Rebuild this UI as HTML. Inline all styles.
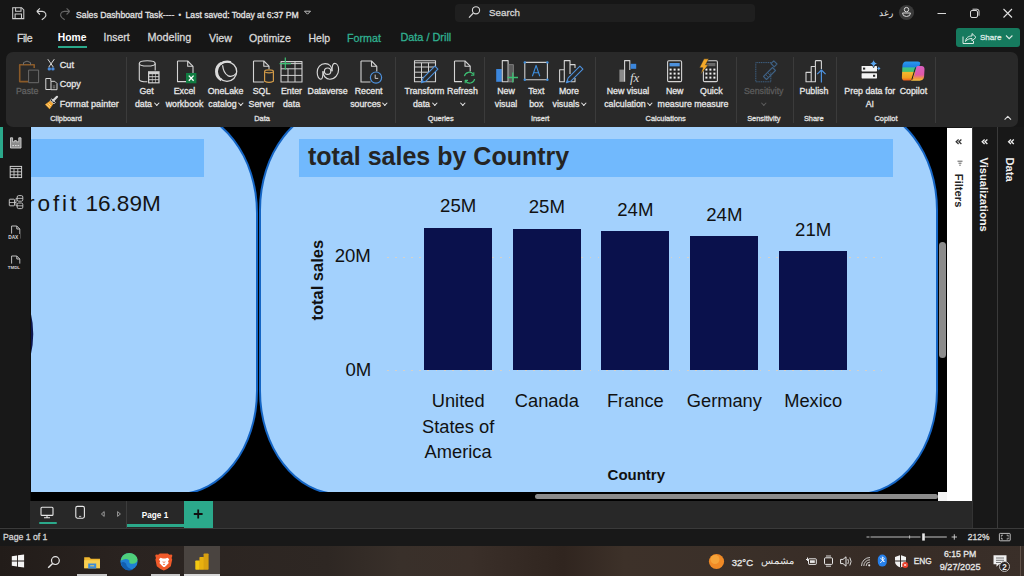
<!DOCTYPE html>
<html><head><meta charset="utf-8">
<style>
*{margin:0;padding:0;box-sizing:border-box}
html,body{width:1024px;height:576px;overflow:hidden;background:#161616;font-family:"Liberation Sans",sans-serif;color:#e6e6e6}
.a{position:absolute}
.t{position:absolute;white-space:nowrap;line-height:1}
.s{-webkit-text-stroke:0.3px currentColor}
svg{position:absolute;overflow:visible}
.chv{display:inline-block;width:3.6px;height:3.6px;border-right:0.9px solid currentColor;border-bottom:0.9px solid currentColor;transform:rotate(45deg);vertical-align:2.2px}
</style></head>
<body>

<div class="t s" style="left:76.00px;top:11.14px;font-size:8.7px;color:#e2e2e2;font-weight:normal;">Sales Dashboard Task----</div>
<div class="t " style="left:178.30px;top:11.14px;font-size:8.7px;color:#dedede;font-weight:normal;">&bull;</div>
<div class="t s" style="left:185.60px;top:11.22px;font-size:8.6px;color:#e2e2e2;font-weight:normal;">Last saved: Today at 6:37 PM</div>
<div class="a" style="left:455px;top:4px;width:300px;height:17.5px;background:#1f1f1f;border-radius:4px"></div>
<div class="t s" style="left:489.00px;top:7.90px;font-size:9.8px;color:#d4d4d4;font-weight:normal;">Search</div>
<div class="a" style="left:956px;top:28px;width:64px;height:19px;background:#167a5e;border-radius:3px"></div>
<div class="t s" style="left:980.00px;top:34.43px;font-size:8.0px;color:#dceae4;font-weight:normal;">Share</div>
<div class="t " style="left:878.50px;top:9.41px;font-size:9.2px;color:#e8e8e8;font-weight:normal;">رغد</div>
<svg style="left:0;top:0" width="1024" height="52" viewBox="0 0 1024 52" fill="none">
 <!-- save -->
 <path d="M12.7 7.7H21.6L23.8 9.9V18.6H12.7Z" stroke="#cfcfcf" stroke-width="1.05"/>
 <path d="M15.6 7.7V11.2H21V7.7M15.1 18.6V14H21.5V18.6" stroke="#cfcfcf" stroke-width="1.05"/>
 <!-- undo -->
 <path d="M36.8 11.4L39.9 8.3M36.8 11.4L39.9 14.5M37 11.4H42.2C45.8 11.4 47.2 15.2 44.6 17.6L41.8 19.8" stroke="#d8d8d8" stroke-width="1.1"/>
 <!-- redo -->
 <path d="M69.7 11.4L66.6 8.3M69.7 11.4L66.6 14.5M69.5 11.4H64.3C60.7 11.4 59.3 15.2 61.9 17.6L64.7 19.8" stroke="#666" stroke-width="1.1"/>
 <!-- dropdown triangle -->
 <path d="M304.5 11.2h6l-3 3z" stroke="#cfcfcf" stroke-width="0.9"/>
 <!-- search icon -->
 <circle cx="476" cy="10.3" r="3.6" stroke="#d8d8d8" stroke-width="1.1"/>
 <path d="M473.4 13l-4.4 4.6" stroke="#d8d8d8" stroke-width="1.2"/>
 <!-- avatar -->
 <circle cx="906.5" cy="12.5" r="7.6" fill="#3a3a3a"/>
 <circle cx="906.5" cy="9.6" r="2.2" stroke="#d8d8d8" stroke-width="1"/>
 <path d="M902.5 13h8a4 3.5 0 0 1 -8 0z" stroke="#d8d8d8" stroke-width="1"/>
 <!-- window controls -->
 <path d="M937.5 13.5h8.5" stroke="#d8d8d8" stroke-width="1"/>
 <rect x="970.5" y="10.5" width="7" height="7" rx="1.5" stroke="#d8d8d8" stroke-width="1"/>
 <path d="M972.5 9.2h4.5a2 2 0 0 1 2 2v4.5" stroke="#d8d8d8" stroke-width="1"/>
 <path d="M1003.5 9l8.5 8.5M1012 9l-8.5 8.5" stroke="#e0e0e0" stroke-width="1.1"/>
 <!-- share icon -->
 <path d="M963 36.5v7h10.5v-2.5" stroke="#dceae4" stroke-width="1"/>
 <path d="M965.5 41.5c0.5-4 3-5.5 6.5-5.5v-2.5l4 3.8-4 3.7v-2.5c-3 0-5 1-6.5 3z" stroke="#dceae4" stroke-width="1"/>
 <path d="M1006 35.5l3.2 3.2 3.2-3.2" stroke="#dceae4" stroke-width="1.1"/>
</svg>
<div class="t s" style="left:17.00px;top:32.63px;font-size:10.6px;color:#d8d8d8;font-weight:normal;letter-spacing:-0.5px">File</div>
<div class="t " style="left:57.80px;top:32.88px;font-size:10.3px;color:#ffffff;font-weight:bold;">Home</div>
<div class="t s" style="left:103.60px;top:32.80px;font-size:10.4px;color:#d8d8d8;font-weight:normal;">Insert</div>
<div class="t s" style="left:147.50px;top:32.46px;font-size:10.8px;color:#d8d8d8;font-weight:normal;">Modeling</div>
<div class="t s" style="left:209.00px;top:32.54px;font-size:10.7px;color:#d8d8d8;font-weight:normal;">View</div>
<div class="t s" style="left:249.00px;top:32.63px;font-size:10.6px;color:#d8d8d8;font-weight:normal;">Optimize</div>
<div class="t s" style="left:308.50px;top:32.71px;font-size:10.5px;color:#d8d8d8;font-weight:normal;">Help</div>
<div class="t s" style="left:347.00px;top:32.54px;font-size:10.7px;color:#30b090;font-weight:normal;">Format</div>
<div class="t s" style="left:400.40px;top:32.37px;font-size:10.9px;color:#30b090;font-weight:normal;">Data / Drill</div>
<div class="a" style="left:58px;top:46px;width:28.5px;height:2px;background:#2ba98b"></div>
<div class="a" style="left:5.8px;top:51.8px;width:1012.4px;height:75px;background:#292929;border-radius:7px"></div>
<div class="a" style="left:125.5px;top:57px;width:1px;height:66px;background:#3b3b3b"></div>
<div class="a" style="left:395.2px;top:57px;width:1px;height:66px;background:#3b3b3b"></div>
<div class="a" style="left:483.5px;top:57px;width:1px;height:66px;background:#3b3b3b"></div>
<div class="a" style="left:594.5px;top:57px;width:1px;height:66px;background:#3b3b3b"></div>
<div class="a" style="left:736.1px;top:57px;width:1px;height:66px;background:#3b3b3b"></div>
<div class="a" style="left:792.5px;top:57px;width:1px;height:66px;background:#3b3b3b"></div>
<div class="a" style="left:835.8px;top:57px;width:1px;height:66px;background:#3b3b3b"></div>
<div class="a" style="left:935.0px;top:57px;width:1px;height:66px;background:#3b3b3b"></div>
<div class="t s" style="left:-72.80px;width:200px;text-align:center;top:87.05px;font-size:8.8px;color:#626262;font-weight:normal;">Paste</div>
<div class="t s" style="left:46.50px;width:200px;text-align:center;top:87.05px;font-size:8.8px;color:#e6e6e6;font-weight:normal;">Get</div>
<div class="t s" style="left:46.50px;width:200px;text-align:center;top:99.55px;font-size:8.8px;color:#e6e6e6">data<span class="chv" style="margin-left:2.5px"></span></div>
<div class="t s" style="left:84.50px;width:200px;text-align:center;top:87.05px;font-size:8.8px;color:#e6e6e6;font-weight:normal;">Excel</div>
<div class="t s" style="left:84.50px;width:200px;text-align:center;top:99.55px;font-size:8.8px;color:#e6e6e6;font-weight:normal;">workbook</div>
<div class="t s" style="left:125.50px;width:200px;text-align:center;top:87.05px;font-size:8.8px;color:#e6e6e6;font-weight:normal;">OneLake</div>
<div class="t s" style="left:125.50px;width:200px;text-align:center;top:99.55px;font-size:8.8px;color:#e6e6e6">catalog<span class="chv" style="margin-left:2.5px"></span></div>
<div class="t s" style="left:161.50px;width:200px;text-align:center;top:87.05px;font-size:8.8px;color:#e6e6e6;font-weight:normal;">SQL</div>
<div class="t s" style="left:161.50px;width:200px;text-align:center;top:99.55px;font-size:8.8px;color:#e6e6e6;font-weight:normal;">Server</div>
<div class="t s" style="left:191.50px;width:200px;text-align:center;top:87.05px;font-size:8.8px;color:#e6e6e6;font-weight:normal;">Enter</div>
<div class="t s" style="left:191.50px;width:200px;text-align:center;top:99.55px;font-size:8.8px;color:#e6e6e6;font-weight:normal;">data</div>
<div class="t s" style="left:227.60px;width:200px;text-align:center;top:87.05px;font-size:8.8px;color:#e6e6e6;font-weight:normal;">Dataverse</div>
<div class="t s" style="left:268.60px;width:200px;text-align:center;top:87.05px;font-size:8.8px;color:#e6e6e6;font-weight:normal;">Recent</div>
<div class="t s" style="left:268.60px;width:200px;text-align:center;top:99.55px;font-size:8.8px;color:#e6e6e6">sources<span class="chv" style="margin-left:2.5px"></span></div>
<div class="t s" style="left:324.50px;width:200px;text-align:center;top:87.05px;font-size:8.8px;color:#e6e6e6;font-weight:normal;">Transform</div>
<div class="t s" style="left:324.50px;width:200px;text-align:center;top:99.55px;font-size:8.8px;color:#e6e6e6">data<span class="chv" style="margin-left:2.5px"></span></div>
<div class="t s" style="left:362.50px;width:200px;text-align:center;top:87.05px;font-size:8.8px;color:#e6e6e6;font-weight:normal;">Refresh</div>
<div class="t s" style="left:362.50px;width:200px;text-align:center;top:99.55px;font-size:8.8px;color:#e6e6e6"><span class="chv" style="margin-left:0px"></span></div>
<div class="t s" style="left:406.00px;width:200px;text-align:center;top:87.05px;font-size:8.8px;color:#e6e6e6;font-weight:normal;">New</div>
<div class="t s" style="left:406.00px;width:200px;text-align:center;top:99.55px;font-size:8.8px;color:#e6e6e6;font-weight:normal;">visual</div>
<div class="t s" style="left:436.30px;width:200px;text-align:center;top:87.05px;font-size:8.8px;color:#e6e6e6;font-weight:normal;">Text</div>
<div class="t s" style="left:436.30px;width:200px;text-align:center;top:99.55px;font-size:8.8px;color:#e6e6e6;font-weight:normal;">box</div>
<div class="t s" style="left:469.00px;width:200px;text-align:center;top:87.05px;font-size:8.8px;color:#e6e6e6;font-weight:normal;">More</div>
<div class="t s" style="left:469.00px;width:200px;text-align:center;top:99.55px;font-size:8.8px;color:#e6e6e6">visuals<span class="chv" style="margin-left:2.5px"></span></div>
<div class="t s" style="left:528.00px;width:200px;text-align:center;top:87.05px;font-size:8.8px;color:#e6e6e6;font-weight:normal;">New visual</div>
<div class="t s" style="left:528.00px;width:200px;text-align:center;top:99.55px;font-size:8.8px;color:#e6e6e6">calculation<span class="chv" style="margin-left:2.5px"></span></div>
<div class="t s" style="left:574.70px;width:200px;text-align:center;top:87.05px;font-size:8.8px;color:#e6e6e6;font-weight:normal;">New</div>
<div class="t s" style="left:574.70px;width:200px;text-align:center;top:99.55px;font-size:8.8px;color:#e6e6e6;font-weight:normal;">measure</div>
<div class="t s" style="left:611.30px;width:200px;text-align:center;top:87.05px;font-size:8.8px;color:#e6e6e6;font-weight:normal;">Quick</div>
<div class="t s" style="left:611.30px;width:200px;text-align:center;top:99.55px;font-size:8.8px;color:#e6e6e6;font-weight:normal;">measure</div>
<div class="t s" style="left:663.70px;width:200px;text-align:center;top:87.05px;font-size:8.8px;color:#5c5c5c;font-weight:normal;">Sensitivity</div>
<div class="t s" style="left:663.70px;width:200px;text-align:center;top:99.55px;font-size:8.8px;color:#5c5c5c"><span class="chv" style="margin-left:0px"></span></div>
<div class="t s" style="left:714.00px;width:200px;text-align:center;top:87.05px;font-size:8.8px;color:#e6e6e6;font-weight:normal;">Publish</div>
<div class="t s" style="left:769.80px;width:200px;text-align:center;top:87.05px;font-size:8.8px;color:#e6e6e6;font-weight:normal;">Prep data for</div>
<div class="t s" style="left:769.80px;width:200px;text-align:center;top:99.55px;font-size:8.8px;color:#e6e6e6;font-weight:normal;">AI</div>
<div class="t s" style="left:813.40px;width:200px;text-align:center;top:87.05px;font-size:8.8px;color:#e6e6e6;font-weight:normal;">Copilot</div>
<div class="t s" style="left:-34.00px;width:200px;text-align:center;top:114.54px;font-size:7.4px;color:#e0e0e0;font-weight:normal;">Clipboard</div>
<div class="t s" style="left:162.00px;width:200px;text-align:center;top:114.54px;font-size:7.4px;color:#e0e0e0;font-weight:normal;">Data</div>
<div class="t s" style="left:340.70px;width:200px;text-align:center;top:114.54px;font-size:7.4px;color:#e0e0e0;font-weight:normal;">Queries</div>
<div class="t s" style="left:440.20px;width:200px;text-align:center;top:114.54px;font-size:7.4px;color:#e0e0e0;font-weight:normal;">Insert</div>
<div class="t s" style="left:565.70px;width:200px;text-align:center;top:114.54px;font-size:7.4px;color:#e0e0e0;font-weight:normal;">Calculations</div>
<div class="t s" style="left:663.80px;width:200px;text-align:center;top:114.54px;font-size:7.4px;color:#e0e0e0;font-weight:normal;">Sensitivity</div>
<div class="t s" style="left:713.80px;width:200px;text-align:center;top:114.54px;font-size:7.4px;color:#e0e0e0;font-weight:normal;">Share</div>
<div class="t s" style="left:786.00px;width:200px;text-align:center;top:114.54px;font-size:7.4px;color:#e0e0e0;font-weight:normal;">Copilot</div>
<div class="t s" style="left:59.70px;top:60.71px;font-size:9.2px;color:#e6e6e6;font-weight:normal;">Cut</div>
<div class="t s" style="left:59.70px;top:80.18px;font-size:9.0px;color:#e6e6e6;font-weight:normal;">Copy</div>
<div class="t s" style="left:59.70px;top:99.60px;font-size:9.1px;color:#e6e6e6;font-weight:normal;">Format painter</div>
<svg style="left:0;top:0" width="1024" height="130" viewBox="0 0 1024 130" fill="none" stroke-linejoin="round">
 <!-- Paste -->
 <path d="M34.2 68V64.8H19.7V81.6H28" stroke="#8a5a28" stroke-width="1.6"/>
 <path d="M23.5 64.8V62.6Q27 59.6 30.5 62.6V64.8" stroke="#707070" stroke-width="1"/>
 <rect x="28.6" y="70.1" width="10" height="12.6" fill="#292929" stroke="#6c6c6c" stroke-width="1"/>
 <!-- Cut -->
 <path d="M47.8 59.2l5.6 8M54.3 59.2l-5.6 8" stroke="#dadada" stroke-width="1"/>
 <circle cx="49.3" cy="68.9" r="1.7" fill="#4a8ad8"/>
 <circle cx="52.9" cy="68.9" r="1.7" fill="#4a8ad8"/>
 <!-- Copy -->
 <path d="M50.8 78.5H45.8V89.5H50.8" stroke="#d6d6d6" stroke-width="1"/>
 <path d="M50.8 78.5V81.3M51 81.3H54.8L57 83.5V89.7H51Z" stroke="#d6d6d6" stroke-width="1"/>
 <path d="M52.8 86h2.4M52.8 87.8h2.4" stroke="#9a9a9a" stroke-width="0.8"/>
 <!-- Format painter -->
 <path d="M45 104.6L49.6 109.2L53.6 103.6L50.4 100.6Z" fill="#f2a531"/>
 <path d="M46.6 104.4L49.8 107.6M48.4 103.4L51 106" stroke="#ffe7a8" stroke-width="0.8"/>
 <path d="M50.2 100.4L53.8 104L55.4 102.4L51.8 98.8Z" fill="#292929" stroke="#d8d8d8" stroke-width="0.9"/>
 <path d="M53.2 100.6L57 96.8" stroke="#d8d8d8" stroke-width="2.2" stroke-linecap="round"/>
 <!-- Get data -->
 <path d="M139.3 63.4V79.5Q139.3 81.8 147.3 81.8" stroke="#d4d4d4" stroke-width="1.1"/>
 <path d="M155.2 63.4V70.6" stroke="#d4d4d4" stroke-width="1.1"/>
 <ellipse cx="147.25" cy="63.4" rx="7.95" ry="2.6" stroke="#d4d4d4" stroke-width="1.1"/>
 <rect x="148" y="71.2" width="11.6" height="12.2" fill="#d0d0d0"/>
 <g fill="#1e1e1e"><rect x="149.3" y="74.2" width="2.6" height="2"/><rect x="152.5" y="74.2" width="2.6" height="2"/><rect x="155.7" y="74.2" width="2.6" height="2"/>
 <rect x="149.3" y="77.2" width="2.6" height="2"/><rect x="152.5" y="77.2" width="2.6" height="2"/><rect x="155.7" y="77.2" width="2.6" height="2"/>
 <rect x="149.3" y="80.2" width="2.6" height="2"/><rect x="152.5" y="80.2" width="2.6" height="2"/><rect x="155.7" y="80.2" width="2.6" height="2"/></g>
 <!-- Excel -->
 <path d="M177.5 61H187.7L193 66.3V73M186 81.6H177.5V61" stroke="#d4d4d4" stroke-width="1.1"/>
 <path d="M187.7 61V66.3H193" stroke="#d4d4d4" stroke-width="1.1"/>
 <rect x="186" y="73" width="10.4" height="10.3" fill="#107c41"/>
 <path d="M188.8 75.6l4.8 5.2M193.6 75.6l-4.8 5.2" stroke="#ffffff" stroke-width="1.3"/>
 <!-- OneLake -->
 <circle cx="227" cy="71.6" r="9.7" stroke="#dadada" stroke-width="1.3"/>
 <path d="M221.2 63.2A9.6 9.6 0 0 0 221.4 80" stroke="#dadada" stroke-width="2.6"/>
 <path d="M220.5 63.8Q225 60.6 231 62.2" stroke="#dadada" stroke-width="2.2"/>
 <path d="M222.6 65.2Q223.4 72.8 227.8 75.6Q232.2 78 236.4 73.4" stroke="#dadada" stroke-width="1.2"/>
 <!-- SQL -->
 <path d="M253.5 61H263.8L269 66.2V69M263.8 82H253.5V61" stroke="#d4d4d4" stroke-width="1.1"/>
 <path d="M263.8 61V66.2H269" stroke="#d4d4d4" stroke-width="1.1"/>
 <path d="M264.6 71.3V81.3Q269 83.6 273.4 81.3V71.3" stroke="#d19a48" stroke-width="1.2" fill="#292929"/>
 <ellipse cx="269" cy="71.3" rx="4.4" ry="1.5" stroke="#d19a48" stroke-width="1.2" fill="#292929"/>
 <!-- Enter data -->
 <rect x="281" y="61.6" width="21" height="20.4" stroke="#d0d0d0" stroke-width="1.1"/>
 <path d="M281 63.6H302M281 68.8H302M281 75.4H302M288 68.8V82M295 61.6V82" stroke="#d0d0d0" stroke-width="1"/>
 <path d="M285.3 57.6V69.8M279.6 63.7H291" stroke="#3dbf73" stroke-width="1.2"/>
 <!-- Dataverse -->
 <path d="M332 71.2C332 66.6 329.2 63.6 325.2 63.6C320.4 63.6 317.2 67.4 317.2 72.2C317.2 76.6 319 79.2 320.8 79.2C322.4 79.2 323 76 323 71.2" stroke="#d8d8d8" stroke-width="1.15"/>
 <path d="M323 71.2C323 76 326 79.2 329.8 79.2C335.2 79.2 338.6 74.4 338.6 69.4C338.6 65.6 336.6 63.4 334.6 63.4C333 63.4 332 65.6 332 71.2" stroke="#d8d8d8" stroke-width="1.15"/>
 <circle cx="327.6" cy="71.2" r="3.2" stroke="#d8d8d8" stroke-width="1.15"/>
 <!-- Recent -->
 <path d="M361 61H371.5L376.8 66.3V71.5M370.5 82H361V61" stroke="#d4d4d4" stroke-width="1.1"/>
 <path d="M371.5 61V66.3H376.8" stroke="#d4d4d4" stroke-width="1.1"/>
 <circle cx="376" cy="77.6" r="5.6" stroke="#4d91dd" stroke-width="1.2" fill="#292929"/>
 <path d="M375.2 74.6V78.4H378.2" stroke="#d8d8d8" stroke-width="0.9"/>
 <!-- Transform -->
 <rect x="414.5" y="60.8" width="21" height="21" stroke="#d0d0d0" stroke-width="1.1"/>
 <path d="M414.5 62.8H435.5M414.5 67H435.5M414.5 72.2H431M414.5 77.4H426M421.5 62.8V81.8M428.5 62.8V72" stroke="#d0d0d0" stroke-width="1"/>
 <path d="M434.9 66.2L437.9 69.2L426.2 80.9L421.4 82.8L423.2 77.9Z" fill="#292929" stroke="#4d91dd" stroke-width="1.1"/>
 <path d="M421.4 82.8L422.4 79.8L424.4 81.8Z" fill="#4d91dd"/>
 <!-- Refresh -->
 <path d="M454.5 61H465L470.2 66.2V71.5M462 81.6H454.5V61" stroke="#d4d4d4" stroke-width="1.1"/>
 <path d="M465 61V66.2H470.2" stroke="#d4d4d4" stroke-width="1.1"/>
 <path d="M464.4 76.2A5 5 0 0 1 473.5 74.5M474.6 79A5 5 0 0 1 465.5 80.8" stroke="#3dbf73" stroke-width="1.2"/>
 <path d="M473.8 72.2V75.2H471M465.2 83.2V80.4H468" stroke="#3dbf73" stroke-width="1.1"/>
 <!-- New visual -->
 <rect x="496.2" y="69" width="5.6" height="12.8" fill="#3b86dc"/>
 <rect x="502.3" y="60.6" width="5.8" height="21.2" fill="#292929" stroke="#d4d4d4" stroke-width="1.1"/>
 <rect x="508.6" y="64.6" width="4.8" height="17.2" fill="#5a5a5a" stroke="#8a8a8a" stroke-width="0.8"/>
 <path d="M512.8 72.5V82.6M507.5 77.5H518" stroke="#3dbf73" stroke-width="1.3"/>
 <!-- Text box -->
 <rect x="524.8" y="62.4" width="22.6" height="17.4" stroke="#cfcfcf" stroke-width="1.1"/>
 <g fill="#3d8fe0"><circle cx="524.8" cy="62.4" r="1.2"/><circle cx="547.4" cy="62.4" r="1.2"/><circle cx="524.8" cy="79.8" r="1.2"/><circle cx="547.4" cy="79.8" r="1.2"/></g>
 <path d="M532.4 76.2L536.1 65.4L539.8 76.2M533.6 72.8H538.6" stroke="#3d8fe0" stroke-width="1.1"/>
 <!-- More visuals -->
 <path d="M559.6 81.8V69.8H564.3V81.8ZM564.3 81.8V60.6H570V74M570 64.6H575V68" stroke="#d4d4d4" stroke-width="1.1"/>
 <path d="M575 78V81.8H570.5" stroke="#d4d4d4" stroke-width="1.1"/>
 <path d="M579.9 66.2L582.9 69.2L571.2 80.9L566.4 82.8L568.2 77.9Z" fill="#292929" stroke="#4d91dd" stroke-width="1.1"/>
 <path d="M566.4 82.8L567.4 79.8L569.4 81.8Z" fill="#4d91dd"/>
 <!-- New visual calc -->
 <rect x="619.4" y="69.6" width="4.6" height="12.2" fill="#8a8a8a"/>
 <path d="M624.6 81.8V60.6H629.8V70" stroke="#d4d4d4" stroke-width="1.1"/>
 <rect x="630.6" y="63.8" width="5.6" height="5" fill="#3b86dc"/>
 <text x="630" y="81.5" font-family="Liberation Serif" font-style="italic" font-size="13" fill="#d8d8d8">fx</text>
 <!-- New measure -->
 <rect x="667.6" y="60.8" width="14" height="20.8" rx="1.2" stroke="#d4d4d4" stroke-width="1.1"/>
 <rect x="669.5" y="63" width="10.2" height="3.4" fill="#4d91dd"/>
 <g fill="#f2f2f2"><rect x="669.6" y="68.6" width="2" height="2"/><rect x="673.6" y="68.6" width="2" height="2"/><rect x="677.6" y="68.6" width="2" height="2"/>
 <rect x="669.6" y="72.6" width="2" height="2"/><rect x="673.6" y="72.6" width="2" height="2"/><rect x="677.6" y="72.6" width="2" height="2"/>
 <rect x="669.6" y="76.6" width="2" height="2"/><rect x="673.6" y="76.6" width="2" height="2"/><rect x="677.6" y="76.6" width="2" height="2"/></g>
 <!-- Quick measure -->
 <rect x="703.4" y="60.8" width="14" height="20.8" rx="1.2" stroke="#d4d4d4" stroke-width="1.1"/>
 <rect x="705.6" y="63" width="9.8" height="3.2" fill="#6a6a6a"/>
 <g fill="#f2f2f2"><rect x="705.4" y="68.6" width="2" height="2"/><rect x="709.4" y="68.6" width="2" height="2"/><rect x="713.4" y="68.6" width="2" height="2"/>
 <rect x="705.4" y="72.6" width="2" height="2"/><rect x="709.4" y="72.6" width="2" height="2"/><rect x="713.4" y="72.6" width="2" height="2"/>
 <rect x="705.4" y="76.6" width="2" height="2"/><rect x="709.4" y="76.6" width="2" height="2"/><rect x="713.4" y="76.6" width="2" height="2"/></g>
 <path d="M704 58.8H708.8L705.6 64.8H708.4L700.6 74.4L702.8 67.8H699.4Z" fill="#f4a92a" stroke="#292929" stroke-width="0.6"/>
 <!-- Sensitivity -->
 <path d="M771 62.6H755.8V81.8H770.8V72" stroke="#3e6184" stroke-width="1" stroke-dasharray="1.2 0.6"/>
 <path d="M763.5 76.5L772.5 67.5L775.5 70.5L766.5 79.5Z" stroke="#3e6184" stroke-width="1.1"/>
 <path d="M771 63.5L773.8 60.8L777 64L774.2 66.8Z" stroke="#3e6184" stroke-width="1.1"/>
 <path d="M765.6 74.6L768.6 77.6M767.6 72.6L770.6 75.6" stroke="#3e6184" stroke-width="0.8"/>
 <!-- Publish -->
 <path d="M806 81.8V72.4H811.2V81.8ZM811.2 72.4V66.5H815.4V81.8H811.2M815.4 66.5V61.5Q815.4 60.6 816.3 60.6H820.5Q821.4 60.6 821.4 61.5V69" stroke="#d4d4d4" stroke-width="1.1"/>
 <path d="M821.4 82.6V70.2M817.2 74.2L821.4 70L825.6 74.2" stroke="#4d91dd" stroke-width="1.2"/>
 <!-- Prep data for AI -->
 <rect x="861.6" y="66" width="15.4" height="5.4" rx="0.6" fill="#f4f4f4"/>
 <rect x="861.6" y="73.2" width="15.4" height="5.2" rx="0.6" fill="#f4f4f4"/>
 <rect x="863" y="67.6" width="2.2" height="2" fill="#292929"/>
 <rect x="873" y="74.8" width="2.2" height="2" fill="#292929"/>
 <path d="M873.6 59.5Q874.4 63 877.6 63.6Q874.4 64.2 873.6 67.8Q872.8 64.2 869.6 63.6Q872.8 63 873.6 59.5Z" fill="#5aa6f0" stroke="#292929" stroke-width="0.7"/>
 <path d="M878.8 66.2Q879.2 68 880.6 68.4Q879.2 68.8 878.8 70.6Q878.4 68.8 877 68.4Q878.4 68 878.8 66.2Z" fill="#5aa6f0"/>
 <!-- Copilot -->
 <defs>
  <linearGradient id="cpA" x1="0" y1="0" x2="0" y2="1"><stop offset="0" stop-color="#2a9af0"/><stop offset="0.28" stop-color="#1e7fe0"/><stop offset="0.34" stop-color="#3cc48a"/><stop offset="0.52" stop-color="#46c070"/><stop offset="0.58" stop-color="#f4b82c"/><stop offset="0.85" stop-color="#f0a020"/><stop offset="1" stop-color="#f05a1a"/></linearGradient>
  <linearGradient id="cpB" x1="0" y1="0" x2="0" y2="1"><stop offset="0" stop-color="#d860c0"/><stop offset="0.6" stop-color="#e058a8"/><stop offset="0.85" stop-color="#f09a40"/><stop offset="1" stop-color="#f4c040"/></linearGradient>
 </defs>
 <path d="M906 61.4H917.6Q921.4 61.4 919.8 65L913.8 78Q912.6 80.6 909.6 80.6H905Q901.8 80.6 901.9 77.2L902.4 66Q902.8 61.4 906 61.4Z" fill="url(#cpA)"/>
 <path d="M917.6 66H921.6Q924.7 66 924.5 69.6L924.1 76.6Q923.8 80.7 919.6 80.7H910.6Q912.8 79.8 913.8 77.6L916.2 67.8Q916.6 66 917.6 66Z" fill="url(#cpB)"/>
 <path d="M915.6 67.4L911.8 79.6" stroke="#1c1c1c" stroke-width="1"/>
 <!-- collapse chevron -->
 <path d="M1004.6 119.6l3.2-3.2 3.2 3.2" stroke="#e0e0e0" stroke-width="1.1"/>
</svg>
<div class="a" style="left:0;top:127px;width:30px;height:400px;background:#181818"></div>
<div class="a" style="left:0;top:127px;width:2.5px;height:31px;background:#2ba98b"></div>
<svg style="left:0;top:120px" width="30" height="160" viewBox="0 120 30 160" fill="none">
 <path d="M10.5 137.8V148H21V137.8H18.8V141.8H16.4V140.6H14.6V141.8H12.6V137.8Z" fill="#8c8c8c" stroke="#d0d0d0" stroke-width="0.9"/>
 <path d="M12.4 145.6h1.6M15 145.6h1.6M17.6 145.6h1.6" stroke="#e0e0e0" stroke-width="1"/>
 <rect x="10.2" y="166.4" width="11.4" height="11.2" stroke="#cfcfcf" stroke-width="1"/>
 <path d="M10.2 168.6H21.6M10.2 171.8H21.6M10.2 174.8H21.6M14 168.6V177.6M17.8 168.6V177.6" stroke="#cfcfcf" stroke-width="0.9"/>
 <rect x="9.3" y="199.2" width="5.2" height="6.6" rx="0.6" stroke="#cfcfcf" stroke-width="0.9"/>
 <path d="M9.3 202.5H14.5" stroke="#cfcfcf" stroke-width="0.8"/>
 <rect x="17.2" y="195.6" width="5.6" height="5.6" rx="1.4" stroke="#cfcfcf" stroke-width="0.9"/>
 <rect x="17.2" y="203" width="5.6" height="5.6" rx="1.4" stroke="#cfcfcf" stroke-width="0.9"/>
 <path d="M17.2 198.4H22.8M17.2 205.8H22.8M14.5 202.5H16V198.4H17.2M16 202.5V205.8H17.2" stroke="#cfcfcf" stroke-width="0.8"/>
 <path d="M11.6 233.6V226H16.8L19.8 229V238.6M16.8 226V229H19.8" stroke="#cfcfcf" stroke-width="0.9"/>
 <rect x="8" y="234" width="12" height="5" fill="#181818"/>
 <text x="8.2" y="238.8" font-family="Liberation Sans" font-weight="bold" font-size="4.8" fill="#d8d8d8">DAX</text>
 <path d="M11.6 263.6V256H16.8L19.8 259V263.6M16.8 256V259H19.8" stroke="#cfcfcf" stroke-width="0.9"/>
 <text x="7.8" y="268.6" font-family="Liberation Sans" font-weight="bold" font-size="4.4" fill="#d8d8d8">TMDL</text>
</svg>
<div class="a" style="left:30px;top:127px;width:917px;height:374px;background:#000"></div>
<div class="a" style="left:30px;top:127px;width:917px;height:365px;overflow:hidden">
  <div class="a" style="left:-400px;top:-18.5px;width:627.5px;height:386.0px;background:#a3d1fd;border:2px solid #1565c4;border-radius:80px/104px"></div>
  <div class="a" style="left:0;top:12px;width:174px;height:38px;background:#71b9fd"></div>
  <svg style="left:0;top:0" width="20" height="365" viewBox="0 0 20 365" fill="none"><path d="M-0.5 185.5Q4.6 207 -0.5 228.5" stroke="#0c1650" stroke-width="2.4"/></svg>
  <div class="a" style="left:228.5px;top:-21.5px;width:679px;height:389.0px;background:#a3d1fd;border:2px solid #1565c4;border-radius:80px/104px"></div>
  <div class="t" style="left:-3px;top:65.87px;font-size:22.6px;color:#141414"><span style="letter-spacing:2.9px">rofit</span> 16.89M</div>
  <div class="a" style="left:269px;top:12px;width:594px;height:38px;background:#71b9fd"></div>
</div>
<div class="a" style="left:387px;top:256.5px;width:495px;height:1.6px;background:repeating-linear-gradient(90deg,#d6d2ca 0 1.8px,transparent 1.8px 8.1px)"></div>
<div class="a" style="left:387px;top:369.6px;width:495px;height:1.6px;background:repeating-linear-gradient(90deg,#d6d2ca 0 1.8px,transparent 1.8px 8.1px)"></div>
<div class="a" style="left:424px;top:227.7px;width:68.3px;height:142.3px;background:#0a114c"></div>
<div class="t " style="left:358.15px;width:200px;text-align:center;top:197.36px;font-size:18.6px;color:#111111;font-weight:normal;">25M</div>
<div class="a" style="left:512.7px;top:228.5px;width:68.3px;height:141.5px;background:#0a114c"></div>
<div class="t " style="left:446.85px;width:200px;text-align:center;top:198.16px;font-size:18.6px;color:#111111;font-weight:normal;">25M</div>
<div class="a" style="left:601.2px;top:231.4px;width:68.3px;height:138.6px;background:#0a114c"></div>
<div class="t " style="left:535.35px;width:200px;text-align:center;top:201.06px;font-size:18.6px;color:#111111;font-weight:normal;">24M</div>
<div class="a" style="left:690.2px;top:236.3px;width:68.3px;height:133.7px;background:#0a114c"></div>
<div class="t " style="left:624.35px;width:200px;text-align:center;top:205.96px;font-size:18.6px;color:#111111;font-weight:normal;">24M</div>
<div class="a" style="left:779px;top:251px;width:68.3px;height:119.0px;background:#0a114c"></div>
<div class="t " style="left:713.15px;width:200px;text-align:center;top:220.66px;font-size:18.6px;color:#111111;font-weight:normal;">21M</div>
<div class="t " style="left:170.80px;width:200px;text-align:right;top:247.16px;font-size:18.6px;color:#111111;font-weight:normal;">20M</div>
<div class="t " style="left:171.30px;width:200px;text-align:right;top:361.06px;font-size:18.6px;color:#111111;font-weight:normal;">0M</div>
<div class="t " style="left:358.15px;width:200px;text-align:center;top:392.21px;font-size:18.3px;color:#111111;font-weight:normal;">United</div>
<div class="t " style="left:446.85px;width:200px;text-align:center;top:392.21px;font-size:18.3px;color:#111111;font-weight:normal;">Canada</div>
<div class="t " style="left:535.35px;width:200px;text-align:center;top:392.21px;font-size:18.3px;color:#111111;font-weight:normal;">France</div>
<div class="t " style="left:624.35px;width:200px;text-align:center;top:392.21px;font-size:18.3px;color:#111111;font-weight:normal;">Germany</div>
<div class="t " style="left:713.15px;width:200px;text-align:center;top:392.21px;font-size:18.3px;color:#111111;font-weight:normal;">Mexico</div>
<div class="t " style="left:358.15px;width:200px;text-align:center;top:417.51px;font-size:18.3px;color:#111111;font-weight:normal;">States of</div>
<div class="t " style="left:358.15px;width:200px;text-align:center;top:442.51px;font-size:18.3px;color:#111111;font-weight:normal;">America</div>
<div class="t " style="left:536.30px;width:200px;text-align:center;top:466.90px;font-size:15px;color:#111111;font-weight:bold;">Country</div>
<div class="t" style="left:266.5px;width:100px;text-align:center;top:272.3px;height:16.5px;font-size:16.5px;font-weight:bold;color:#111111;transform:rotate(-90deg)">total sales</div>
<div class="t " style="left:308.00px;top:143.54px;font-size:25px;color:#252423;font-weight:bold;">total sales by Country</div>
<div class="a" style="left:30px;top:127px;width:1px;height:374px;background:#0d0d0d"></div>
<div class="a" style="left:939px;top:242px;width:6.5px;height:115.7px;background:#8c8c8c;border-radius:3.5px"></div>
<div class="a" style="left:535px;top:493.7px;width:402.5px;height:5.8px;background:#8c8c8c;border-radius:3px"></div>
<div class="a" style="left:938px;top:491.5px;width:9px;height:9px;background:#f4f4f4"></div>
<div class="a" style="left:947px;top:127.5px;width:24.8px;height:373.5px;background:#ffffff"></div>
<div class="a" style="left:971.8px;top:127px;width:52.2px;height:400.5px;background:#181818"></div>
<div class="a" style="left:971.8px;top:127px;width:1px;height:400.5px;background:#333"></div>
<div class="a" style="left:997px;top:127px;width:1px;height:400.5px;background:#3a3a3a"></div>
<svg style="left:940px;top:130px" width="84" height="40" viewBox="940 130 84 40" fill="none">
 <path d="M961.4 139.6l-2.4 2.2 2.4 2.2M958.6 139.6l-2.4 2.2 2.4 2.2" stroke="#333" stroke-width="1.3"/>
 <path d="M987.4 139.6l-2.4 2.2 2.4 2.2M984.6 139.6l-2.4 2.2 2.4 2.2" stroke="#f0f0f0" stroke-width="1.3"/>
 <path d="M1013.8 139.6l-2.4 2.2 2.4 2.2M1011 139.6l-2.4 2.2 2.4 2.2" stroke="#f0f0f0" stroke-width="1.3"/>
 <path d="M957.5 161.2h5M958.5 163.2h3M959.3 165.2h1.4" stroke="#4a4a4a" stroke-width="0.9"/>
</svg>
<div class="t" style="left:897.70px;top:184.70px;width:120px;height:11.2px;text-align:center;font-size:11.2px;font-weight:bold;color:#252525;transform:rotate(90deg)">Filters</div>
<div class="t" style="left:923.40px;top:188.70px;width:120px;height:11.2px;text-align:center;font-size:11.2px;font-weight:bold;color:#f0f0f0;transform:rotate(90deg)">Visualizations</div>
<div class="t" style="left:949.40px;top:164.40px;width:120px;height:11.2px;text-align:center;font-size:11.2px;font-weight:bold;color:#f0f0f0;transform:rotate(90deg)">Data</div>
<div class="a" style="left:30px;top:501px;width:941.8px;height:26.5px;background:#282828"></div>
<div class="a" style="left:126px;top:501px;width:1px;height:26.5px;background:#3c3c3c"></div>
<div class="a" style="left:126.5px;top:524px;width:57px;height:3px;background:#2ba98b"></div>
<div class="t " style="left:141.80px;top:511.86px;font-size:8.2px;color:#ffffff;font-weight:bold;">Page 1</div>
<div class="a" style="left:183.5px;top:501px;width:29.5px;height:26.5px;background:#2ba98b"></div>
<div class="a" style="left:38.5px;top:522px;width:18px;height:2px;background:#2ba98b;border-radius:1px"></div>
<svg style="left:30px;top:500px" width="200" height="30" viewBox="30 500 200 30" fill="none">
 <rect x="41" y="507.2" width="12" height="8.2" rx="1" stroke="#e8e8e8" stroke-width="1.1"/>
 <path d="M47 515.4V517.4M44 517.8H50" stroke="#e8e8e8" stroke-width="1.1"/>
 <rect x="75.8" y="506.4" width="8.6" height="11.8" rx="1.6" stroke="#e8e8e8" stroke-width="1.1"/>
 <path d="M79 516.4H81.2" stroke="#e8e8e8" stroke-width="0.8"/>
 <path d="M104.2 511.6l-2.8 2.4 2.8 2.4z" stroke="#a8a8a8" stroke-width="0.9"/>
 <path d="M117.6 511.6l2.8 2.4-2.8 2.4z" stroke="#a8a8a8" stroke-width="0.9"/>
 <path d="M198.2 509.6V518.4M193.8 514H202.6" stroke="#111" stroke-width="1.8"/>
</svg>
<div class="a" style="left:0;top:527.5px;width:1024px;height:1px;background:#3a3a3a"></div>
<div class="a" style="left:0;top:528.5px;width:1024px;height:17.2px;background:#181818"></div>
<div class="t s" style="left:3.00px;top:533.44px;font-size:8.7px;color:#d4d4d4;font-weight:normal;">Page 1 of 1</div>
<div class="t s" style="left:789.50px;width:200px;text-align:right;top:533.00px;font-size:8.5px;color:#dcdcdc;font-weight:normal;">212%</div>
<svg style="left:860px;top:528px" width="164" height="18" viewBox="860 528 164 18" fill="none">
 <path d="M866.5 537h3M870.5 537h50" stroke="#cfcfcf" stroke-width="0.9"/>
 <path d="M909.6 535.4V538.6" stroke="#cfcfcf" stroke-width="0.8"/>
 <rect x="922.2" y="533.4" width="2.6" height="7.2" fill="#e8e8e8"/>
 <path d="M924 537h22.8M951.6 537h5.4M954.3 534.3v5.4" stroke="#d8d8d8" stroke-width="0.9"/>
 <rect x="999.4" y="533.4" width="10.8" height="7.4" rx="0.8" stroke="#d0d0d0" stroke-width="0.9"/>
 <path d="M1001.4 536.6v-1.4h1.6M1006.6 535.2h1.6v1.4M1008.2 537.6v1.4h-1.6M1003 539h-1.6v-1.4" stroke="#d0d0d0" stroke-width="0.8"/>
</svg>
<div class="a" style="left:0;top:545.7px;width:1024px;height:30.3px;background:linear-gradient(90deg,#221c19 0%,#2a2320 12%,#2e2723 32%,#39302a 39%,#3a2f29 46%,#30251f 55%,#3d3129 61%,#3b3029 70%,#372c26 85%,#3a2f29 100%)"></div>
<div class="a" style="left:184px;top:546px;width:36px;height:30px;background:#4a4440"></div>
<div class="a" style="left:77px;top:574px;width:30px;height:2px;background:#c8c8c8"></div>
<div class="a" style="left:151px;top:574px;width:29px;height:2px;background:#c8c8c8"></div>
<div class="a" style="left:184px;top:574px;width:36px;height:2px;background:#d8d8d8"></div>
<svg style="left:0;top:546px" width="1024" height="30" viewBox="0 546 1024 30" fill="none">
 <!-- windows logo -->
 <path d="M11.8 556.2l5.3-0.8v5.1h-5.3zM18 555.3l6.1-0.9v6.1H18zM11.8 561.5h5.3v5.1l-5.3-0.8zM18 561.5h6.1v6.1l-6.1-0.9z" fill="#f4f4f4"/>
 <!-- search -->
 <circle cx="55.4" cy="560.6" r="3.9" stroke="#e8e8e8" stroke-width="1.2"/>
 <path d="M52.6 563.4l-4.4 4.4" stroke="#e8e8e8" stroke-width="1.4"/>
 <!-- explorer -->
 <path d="M84.2 557.2h5.2l1.4 1.6h9.2v9.4H84.2z" fill="#f0b72f"/>
 <path d="M84.2 560.2h15.8v8H84.2z" fill="#f7cf52"/>
 <path d="M88.2 563.5h8v5h-8z" fill="#3c8cd8"/>
 <path d="M90.2 565.8h4" stroke="#f7cf52" stroke-width="1"/>
 <!-- edge -->
 <circle cx="129" cy="561.5" r="8.6" fill="#1f7fd4"/>
 <path d="M120.6 560.6Q122 553 129.5 553Q136 553 137.6 559.5Q137.2 563.6 132.5 563.8Q128.4 563.8 129.4 560.4Q126.5 558.3 123.5 559.5Q121.6 560.3 120.6 560.6Z" fill="#4fcf7a"/>
 <path d="M126 563.5Q126.8 568.6 133 569.4Q131 570.6 128.5 570.4Q122 569.6 121 563Q123 561 126 563.5Z" fill="#125fb0"/>
 <!-- brave -->
 <path d="M159.8 553.4h8l1.6 1.4 2.2-0.2 0.8 1.2-0.8 2.2 0.6 1.6-1.4 6.6-3.6 2.8-3.4 1.4-3.4-1.4-3.6-2.8-1.4-6.6 0.6-1.6-0.8-2.2 0.8-1.2 2.2 0.2z" fill="#f05a2a"/>
 <path d="M160.6 557.8l2.2 0.6h2.6l2.2-0.6 1.6 1.4-1.2 2.4 0.8 1.4-2.4 2.4-1.6 1.6h-1.4l-1.6-1.6-2.4-2.4 0.8-1.4-1.2-2.4z" fill="#ffffff"/>
 <path d="M162.6 561.8l1.4 0.6 1.4-0.6M163 564.4h2" stroke="#f05a2a" stroke-width="0.8"/>
 <!-- power bi -->
 <rect x="195.3" y="560.5" width="4.6" height="9.2" rx="0.8" fill="#f2c811"/>
 <rect x="199.4" y="557" width="4.8" height="12.7" rx="0.8" fill="#e8b00f"/>
 <rect x="203.6" y="553.4" width="5" height="16.3" rx="0.8" fill="#d8a010"/>
 <!-- weather sun -->
 <circle cx="716.5" cy="561.5" r="7.6" fill="#f08a26"/>
 <circle cx="715" cy="559.5" r="4.5" fill="#f6a43a"/>
 <!-- tray icons -->
 <path d="M807.5 557.5v3.5M806 559.5h3" stroke="#e8e8e8" stroke-width="1"/>
 <rect x="808.5" y="558.8" width="7.8" height="5.6" rx="0.6" stroke="#e8e8e8" stroke-width="1"/>
 <rect x="810" y="560.3" width="4.8" height="2.6" fill="#e8e8e8"/>
 <rect x="824.5" y="557.8" width="8" height="6.6" rx="1" stroke="#e8e8e8" stroke-width="1"/>
 <path d="M826 556h5M826 566.2h5" stroke="#e8e8e8" stroke-width="0.9"/>
 <path d="M840.6 559.4h2.4l3-2.6v9.4l-3-2.6h-2.4z" stroke="#e8e8e8" stroke-width="1"/>
 <path d="M847.8 559q1.4 2.5 0 5M849.8 557.5q2.6 4 0 8" stroke="#e8e8e8" stroke-width="0.9"/>
 <path d="M861.5 566a8.5 8.5 0 0 1 8.5-8.5M863.8 566a6.2 6.2 0 0 1 6.2-6.2M866.1 566a3.9 3.9 0 0 1 3.9-3.9" stroke="#d8d8d8" stroke-width="0.9"/>
 <circle cx="869.2" cy="565.3" r="1.1" fill="#e8e8e8"/>
 <rect x="877.8" y="554.6" width="9" height="12" rx="4.5" fill="#2680eb"/>
 <path d="M880.2 557.8l4.2 4.2-2-2v-3.2l2 2-4.2 4.2" stroke="#fff" stroke-width="0.9"/>
 <path d="M900.5 555l5.5 2v4.5q0 4-5.5 6q-5.5-2-5.5-6v-4.5z" fill="#f2f2f2"/>
 <path d="M900.5 555v12.5M895 561h11" stroke="#2d2420" stroke-width="1"/>
 <circle cx="905.2" cy="565" r="3" fill="#e83a24"/>
 <path d="M904 563.8l2.4 2.4M906.4 563.8l-2.4 2.4" stroke="#fff" stroke-width="0.8"/>
 <!-- notifications -->
 <path d="M993.5 555.2h13v9h-7.5l-2.5 2.5v-2.5h-3z" fill="#f0f0f0"/>
 <path d="M996 558h8M996 560.3h8M996 562.5h5" stroke="#555" stroke-width="0.8"/>
 <circle cx="1004.5" cy="566.5" r="5" fill="#2c2522" stroke="#cfcfcf" stroke-width="0.9"/>
 <text x="1004.5" y="569.6" text-anchor="middle" font-family="Liberation Sans" font-weight="bold" font-size="8.2" fill="#f0f0f0">2</text>
 <path d="M1020.5 546v30" stroke="#6a5a50" stroke-width="0.8"/>
</svg>
<div class="t s" style="left:731.80px;top:557.86px;font-size:9.5px;color:#e8e8e8;font-weight:normal;">32°C</div>
<div class="t " style="left:760.60px;top:555.57px;font-size:10.2px;color:#e8e8e8;font-weight:normal;">مشمس</div>
<div class="t s" style="left:913.70px;top:557.07px;font-size:8.3px;color:#e8e8e8;font-weight:normal;">ENG</div>
<div class="t s" style="left:860.10px;width:200px;text-align:center;top:549.84px;font-size:8.7px;color:#e8e8e8;font-weight:normal;">6:15 PM</div>
<div class="t s" style="left:860.10px;width:200px;text-align:center;top:562.61px;font-size:9.2px;color:#e8e8e8;font-weight:normal;">9/27/2025</div>
</body></html>
